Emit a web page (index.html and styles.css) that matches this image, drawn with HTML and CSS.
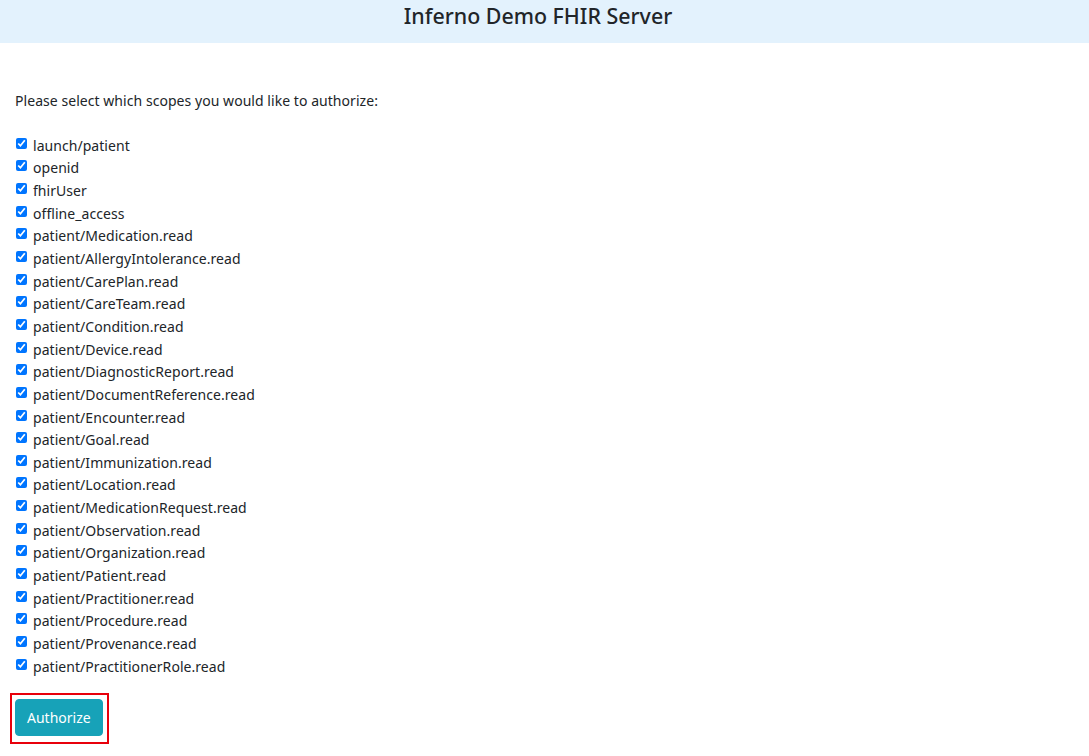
FILE: index.html
```html
<!DOCTYPE html>
<html>
<head>
<meta charset="utf-8">
<link rel="stylesheet" href="styles.css">
</head>
<body>
<header class="topbar"><h1 class="title">Inferno Demo FHIR Server</h1></header>
<main class="content">
  <p class="prompt">Please select which scopes you would like to authorize:</p>
  <form class="scopes">
    <label class="scope"><input type="checkbox" checked><span>launch/patient</span></label>
    <label class="scope"><input type="checkbox" checked><span>openid</span></label>
    <label class="scope"><input type="checkbox" checked><span>fhirUser</span></label>
    <label class="scope"><input type="checkbox" checked><span>offline_access</span></label>
    <label class="scope"><input type="checkbox" checked><span>patient/Medication.read</span></label>
    <label class="scope"><input type="checkbox" checked><span>patient/AllergyIntolerance.read</span></label>
    <label class="scope"><input type="checkbox" checked><span>patient/CarePlan.read</span></label>
    <label class="scope"><input type="checkbox" checked><span>patient/CareTeam.read</span></label>
    <label class="scope"><input type="checkbox" checked><span>patient/Condition.read</span></label>
    <label class="scope"><input type="checkbox" checked><span>patient/Device.read</span></label>
    <label class="scope"><input type="checkbox" checked><span>patient/DiagnosticReport.read</span></label>
    <label class="scope"><input type="checkbox" checked><span>patient/DocumentReference.read</span></label>
    <label class="scope"><input type="checkbox" checked><span>patient/Encounter.read</span></label>
    <label class="scope"><input type="checkbox" checked><span>patient/Goal.read</span></label>
    <label class="scope"><input type="checkbox" checked><span>patient/Immunization.read</span></label>
    <label class="scope"><input type="checkbox" checked><span>patient/Location.read</span></label>
    <label class="scope"><input type="checkbox" checked><span>patient/MedicationRequest.read</span></label>
    <label class="scope"><input type="checkbox" checked><span>patient/Observation.read</span></label>
    <label class="scope"><input type="checkbox" checked><span>patient/Organization.read</span></label>
    <label class="scope"><input type="checkbox" checked><span>patient/Patient.read</span></label>
    <label class="scope"><input type="checkbox" checked><span>patient/Practitioner.read</span></label>
    <label class="scope"><input type="checkbox" checked><span>patient/Procedure.read</span></label>
    <label class="scope"><input type="checkbox" checked><span>patient/Provenance.read</span></label>
    <label class="scope"><input type="checkbox" checked><span>patient/PractitionerRole.read</span></label>
    <div class="highlight"><button type="button" class="btn">Authorize</button></div>
  </form>
</main>
</body>
</html>
```
FILE: styles.css
```css
* { box-sizing: border-box; }
html, body { margin: 0; padding: 0; background: #fff; }
body {
  font-family: "Noto Sans", "Open Sans", sans-serif;
  font-size: 14px;
  color: #212529;
}
.topbar {
  background: #e3f2fd;
  height: 43px;
  display: flex;
  justify-content: center;
  padding: 3px 13px 0 0;
}
.title {
  margin: 0;
  font-size: 21.4px;
  line-height: 26px;
  font-weight: 500;
  color: #212529;
}
.content {
  padding: 0 15px;
}
.prompt {
  margin: 48px 0 0;
  height: 20px;
  line-height: 20px;
  font-size: 14px;
  letter-spacing: 0.05px;
}
.scopes {
  display: flex;
  flex-direction: column;
  margin-top: 23px;
}
.scope {
  display: flex;
  align-items: center;
  height: 22.65px;
  font-size: 14px;
  letter-spacing: 0.05px;
}
.scope input {
  margin: 0 6px 0 1px;
  width: 11px;
  height: 11px;
  accent-color: #0075ff;
  transform: translateY(-2px);
}
.highlight {
  align-self: flex-start;
  margin: 16px 0 0 -5px;
  border: 2px solid #e8000b;
  padding: 4px 4px 6px 3px;
}
.btn {
  display: block;
  background: #17a2b8;
  color: #fff;
  border: 1px solid #17a2b8;
  border-radius: 4px;
  font-family: "Noto Sans", "Open Sans", sans-serif;
  font-size: 14px;
  height: 37px;
  padding: 0 11px;
}
```
